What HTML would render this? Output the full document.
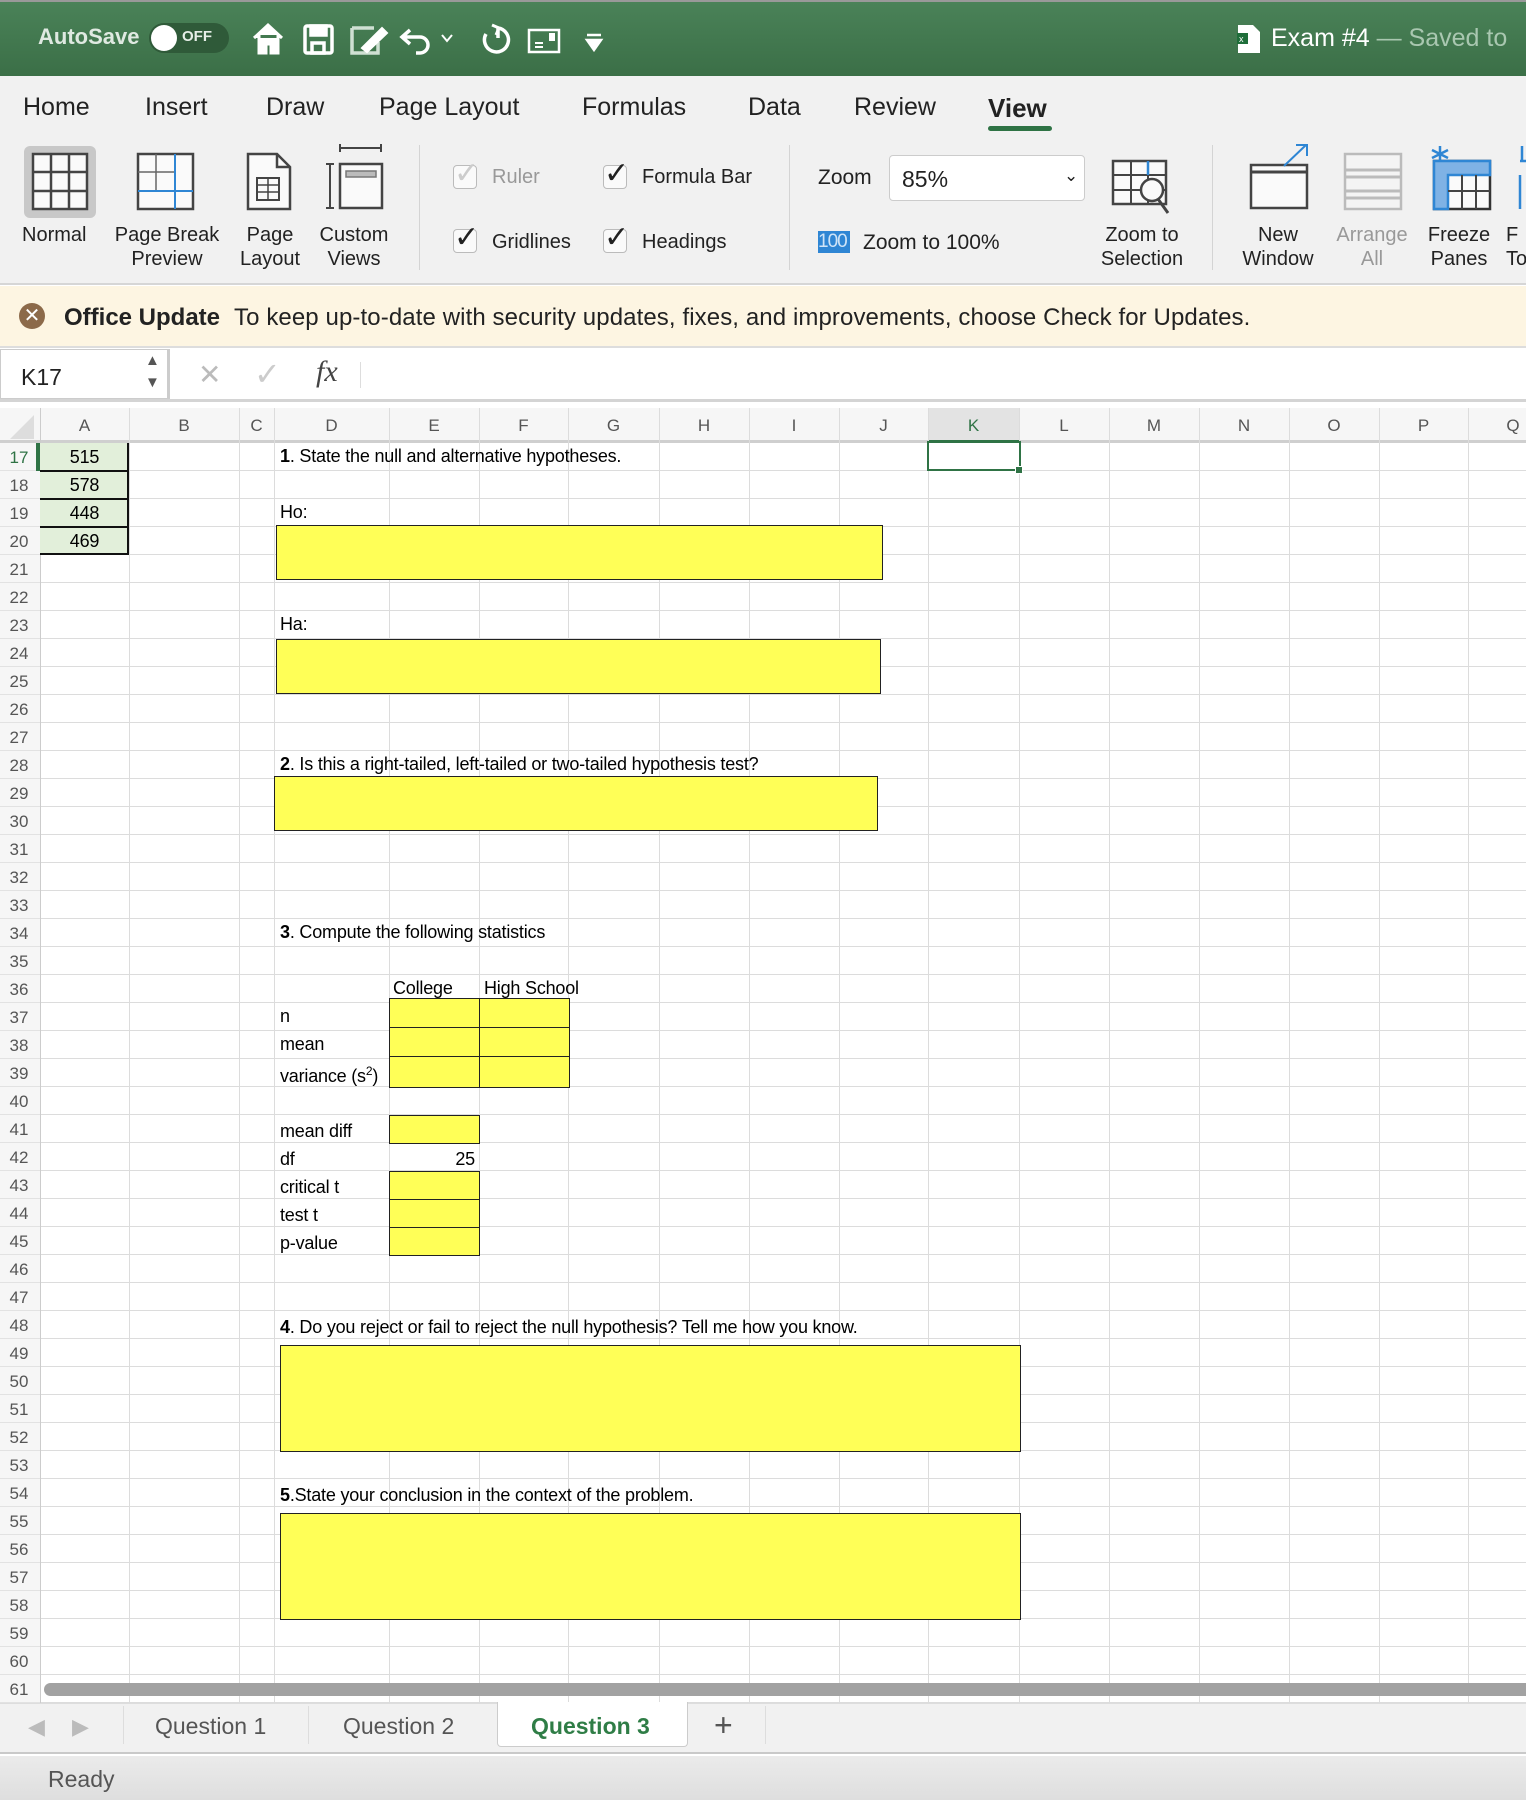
<!DOCTYPE html>
<html><head><meta charset="utf-8"><style>
*{margin:0;padding:0;box-sizing:border-box}
body{width:1526px;height:1800px;overflow:hidden;position:relative;font-family:"Liberation Sans",sans-serif;background:#fff}
.a{position:absolute}
.t{position:absolute;white-space:nowrap}
.cell{position:absolute;font-size:18px;color:#000;white-space:nowrap;font-family:"Liberation Sans",sans-serif;letter-spacing:-0.2px}
.y{position:absolute;background:#ffff57;border:1.5px solid #222}
.rl{position:absolute;left:0;width:38px;text-align:center;font-size:17px;color:#555}
.ch{position:absolute;top:408px;height:35px;line-height:35px;text-align:center;font-size:17px;color:#555}
.vl{position:absolute;top:408px;width:1px;height:1295px;background:#dcdcdc}
.lab{position:absolute;font-size:20px;color:#222;text-align:center;line-height:24px;white-space:nowrap}
.cb{position:absolute;width:24px;height:24px;border:1px solid #bbb;border-radius:4px;background:#fafafa}
</style></head><body>
<div class="a" style="left:0;top:0;width:1526px;height:76px;background:linear-gradient(#4a8258,#3b6f47);border-top:2px solid #999"></div>
<div class="t" style="left:38px;top:24px;font-size:22px;color:#dfe9e1;font-weight:bold">AutoSave</div>
<div class="a" style="left:149px;top:23px;width:80px;height:30px;border-radius:15px;background:#2f5a39"></div>
<div class="a" style="left:151px;top:25px;width:26px;height:26px;border-radius:13px;background:#fff"></div>
<div class="t" style="left:182px;top:28px;font-size:15px;color:#e6efe8;font-weight:bold">OFF</div>
<svg class="a" style="left:250px;top:20px" width="360" height="38" viewBox="0 0 360 38" fill="none" stroke="#fff" stroke-width="3.5">
<path d="M4 18 L18 5 L32 18 M9 15 V33 H16 V24 H21 V33 H28 V15" fill="#fff" stroke-width="3"/>
<rect x="55" y="6" width="27" height="27" rx="2"/><rect x="61" y="6" width="15" height="9" fill="#fff"/><rect x="62" y="23" width="12" height="10"/>
<path d="M102 8 H124 M102 8 V33 H128 V22" stroke="#cfe0d3"/><path d="M112 28 L132 8 L137 13 L117 32 Z" fill="#fff" stroke="#fff" stroke-width="2"/>
<path d="M160 10 L152 17 L160 24 M152 17 H170 A8 8 0 0 1 170 33 H166"/>
<path d="M192 15 L197 21 L202 15" stroke-width="2"/>
<path d="M248 8 V18 M248 8 A12 12 0 1 1 236 14" /><path d="M242 5 L249 8 L246 15" stroke-width="3"/>
<rect x="279" y="10" width="30" height="22" stroke-width="2.5"/><path d="M285 23 H293 M285 27 H293" stroke-width="2"/><rect x="299" y="13" width="6" height="8" fill="#fff" stroke="none"/>
<path d="M337 15 H351 M337 20 H351 L344 30 Z" fill="#fff" stroke-width="2.5"/>
</svg>
<svg class="a" style="left:1236px;top:24px" width="26" height="30"><path d="M2 1 H17 L24 8 V29 H2 Z" fill="#fff"/><rect x="1" y="9" width="11" height="11" fill="#1f6e3a"/><text x="3" y="18" font-size="9" fill="#fff" font-family="Liberation Sans">x</text></svg>
<div class="t" style="left:1271px;top:24px;font-size:25px;color:#fff">Exam #4 <span style="color:#a9c7b0">— Saved to</span></div>
<div class="a" style="left:0;top:76px;width:1526px;height:209px;background:#f1f1f1;border-bottom:2px solid #d6d6d6"></div>
<div class="t" style="left:23px;top:93px;font-size:25px;color:#222">Home</div>
<div class="t" style="left:145px;top:93px;font-size:25px;color:#222">Insert</div>
<div class="t" style="left:266px;top:93px;font-size:25px;color:#222">Draw</div>
<div class="t" style="left:379px;top:93px;font-size:25px;color:#222">Page Layout</div>
<div class="t" style="left:582px;top:93px;font-size:25px;color:#222">Formulas</div>
<div class="t" style="left:748px;top:93px;font-size:25px;color:#222">Data</div>
<div class="t" style="left:854px;top:93px;font-size:25px;color:#222">Review</div>
<div class="t" style="left:988px;top:93px;font-size:26px;color:#222;font-weight:bold">View</div>
<div class="a" style="left:988px;top:126px;width:64px;height:5px;border-radius:3px;background:#2f7345"></div>
<div class="a" style="left:24px;top:146px;width:72px;height:72px;border-radius:6px;background:#c8c8c8"></div>
<svg class="a" style="left:0;top:140px" width="1526" height="80" fill="none" stroke="#444" stroke-width="2.5">
<rect x="33" y="14" width="54" height="55" fill="#fafafa"/><path d="M51 14V69M69 14V69M33 32H87M33 51H87"/>
<rect x="138" y="14" width="55" height="55" fill="#fafafa"/><path d="M138 32H175M156 14V51" stroke="#666" stroke-width="1.5"/><path d="M175 14V69M138 51H193" stroke="#2f86d4" stroke-width="2"/>
<path d="M248 14H277L290 27V69H248Z" fill="#fafafa"/><path d="M277 14V27H290"/><rect x="257" y="38" width="22" height="22" stroke-width="2"/><path d="M268 38V60M257 45H279M257 52H279" stroke-width="1.5"/>
<path d="M340 8H381M340 4V12M381 4V12M330 24V68M326 24H334M326 68H334" stroke-width="2"/><rect x="340" y="24" width="42" height="44" fill="#fafafa"/><rect x="346" y="31" width="30" height="6" fill="#bbb" stroke="#777" stroke-width="1.5"/>
<rect x="1113" y="21" width="53" height="43" fill="#fafafa"/><path d="M1113 35H1166M1113 50H1166M1131 21V64M1148 21V64" stroke-width="2"/><circle cx="1152" cy="50" r="11" fill="#fafafa"/><path d="M1158 59L1168 73" stroke-width="3"/><path d="M1148 21V35" stroke="#2f86d4"/>
<rect x="1251" y="25" width="56" height="43" fill="#fafafa"/><path d="M1251 32H1307" stroke-width="3"/><path d="M1284 26L1306 5M1296 5H1307V16" stroke="#2f86d4" stroke-width="2"/>
<rect x="1345" y="14" width="56" height="55" fill="#f4f4f4" stroke="#bbb"/><path d="M1345 30H1401M1345 37H1401M1345 51H1401M1345 58H1401" stroke="#bbb" stroke-width="3"/>
<rect x="1434" y="21" width="56" height="48" fill="#fafafa" stroke="#333"/><path d="M1434 21H1490V35H1448V69H1434Z" fill="#7fb2e5" stroke="#2f86d4"/><path d="M1462 35V69M1476 35V69M1448 51H1490" stroke-width="2"/><path d="M1440 6V22M1432 10L1448 18M1448 10L1432 18" stroke="#2f86d4" stroke-width="2.5"/>
<path d="M1522 6V22M1520 21H1526M1520 35V69" stroke="#2f86d4" stroke-width="2.5"/>
</svg>
<div class="lab" style="left:22px;top:223px">Normal</div>
<div class="lab" style="left:110px;top:223px;width:114px">Page Break<br>Preview</div>
<div class="lab" style="left:235px;top:223px;width:70px">Page<br>Layout</div>
<div class="lab" style="left:312px;top:223px;width:84px">Custom<br>Views</div>
<div class="a" style="left:419px;top:145px;width:1px;height:125px;background:#d4d4d4"></div>
<div class="a" style="left:789px;top:145px;width:1px;height:125px;background:#d4d4d4"></div>
<div class="a" style="left:1212px;top:145px;width:1px;height:125px;background:#d4d4d4"></div>
<div class="cb" style="left:453px;top:165px"></div><div class="t" style="left:454px;top:156px;font-size:30px;color:#ccc">✓</div>
<div class="t" style="left:492px;top:166px;font-size:20px;color:#999">Ruler</div>
<div class="cb" style="left:603px;top:165px"></div><div class="t" style="left:604px;top:156px;font-size:30px;color:#222">✓</div>
<div class="t" style="left:642px;top:166px;font-size:20px;color:#222">Formula Bar</div>
<div class="cb" style="left:453px;top:229px"></div><div class="t" style="left:454px;top:220px;font-size:30px;color:#222">✓</div>
<div class="t" style="left:492px;top:231px;font-size:20px;color:#222">Gridlines</div>
<div class="cb" style="left:603px;top:229px"></div><div class="t" style="left:604px;top:220px;font-size:30px;color:#222">✓</div>
<div class="t" style="left:642px;top:231px;font-size:20px;color:#222">Headings</div>
<div class="t" style="left:818px;top:166px;font-size:21px;color:#222">Zoom</div>
<div class="a" style="left:889px;top:155px;width:196px;height:46px;background:#fff;border:1px solid #ccc;border-radius:4px"></div>
<div class="t" style="left:902px;top:166px;font-size:23px;color:#222">85%</div>
<div class="t" style="left:1064px;top:166px;font-size:17px;color:#222">⌄</div>
<div class="a" style="left:818px;top:231px;width:32px;height:22px;background:#2f86d4"></div>
<div class="t" style="left:818px;top:231px;font-size:19px;color:#cfe4f7;letter-spacing:-1px">100</div>
<div class="t" style="left:863px;top:231px;font-size:21px;color:#222">Zoom to 100%</div>
<div class="lab" style="left:1092px;top:223px;width:100px">Zoom to<br>Selection</div>
<div class="lab" style="left:1238px;top:223px;width:80px">New<br>Window</div>
<div class="lab" style="left:1332px;top:223px;width:80px;color:#999">Arrange<br>All</div>
<div class="lab" style="left:1419px;top:223px;width:80px">Freeze<br>Panes</div>
<div class="lab" style="left:1506px;top:223px;text-align:left">F<br>To</div>
<div class="a" style="left:0;top:286px;width:1526px;height:62px;background:#fdf5e2;border-bottom:2px solid #ddd"></div>
<div class="a" style="left:19px;top:303px;width:26px;height:26px;border-radius:13px;background:#8c6a4a;color:#fff;font-size:20px;line-height:26px;text-align:center">✕</div>
<div class="t" style="left:64px;top:304px;font-size:24px;color:#222;font-weight:bold">Office Update</div>
<div class="t" style="left:234px;top:304px;font-size:24px;color:#222;letter-spacing:0.1px">To keep up-to-date with security updates, fixes, and improvements, choose Check for Updates.</div>
<div class="a" style="left:0;top:348px;width:1526px;height:54px;background:#fff;border-bottom:3px solid #d4d4d4"></div>
<div class="a" style="left:0;top:349px;width:170px;height:50px;border:1px solid #ccc;border-right:3px solid #ccc"></div>
<div class="t" style="left:21px;top:364px;font-size:23px;color:#222">K17</div>
<div class="t" style="left:145px;top:352px;font-size:15px;color:#555">▲</div>
<div class="t" style="left:145px;top:374px;font-size:15px;color:#555">▼</div>
<div class="t" style="left:198px;top:358px;font-size:28px;color:#bbb">✕</div>
<div class="t" style="left:254px;top:355px;font-size:32px;color:#ccc">✓</div>
<div class="t" style="left:316px;top:355px;font-size:30px;color:#444;font-family:'Liberation Serif',serif;font-style:italic">fx</div>
<div class="a" style="left:360px;top:362px;width:1px;height:26px;background:#ddd"></div>
<div class="a" style="left:0;top:408px;width:1526px;height:35px;background:#f6f6f6;border-bottom:3px solid #cfcfcf"></div>
<div class="a" style="left:0;top:443px;width:40px;height:1260px;background:#f6f6f6"></div>
<div class="a" style="left:40px;top:443px;width:1486px;height:1260px;background:repeating-linear-gradient(to bottom,transparent 0,transparent 27px,#dcdcdc 27px,#dcdcdc 28px)"></div>
<div class="a" style="left:0;top:443px;width:40px;height:1260px;background:repeating-linear-gradient(to bottom,transparent 0,transparent 27px,#e2e2e2 27px,#e2e2e2 28px)"></div>
<svg class="a" style="left:8px;top:413px" width="28" height="28"><path d="M26 2V26H2Z" fill="#ddd"/></svg>
<div class="vl" style="left:40px;background:#ccc"></div><div class="vl" style="left:129px"></div><div class="vl" style="left:239px"></div><div class="vl" style="left:274px"></div><div class="vl" style="left:389px"></div><div class="vl" style="left:479px"></div><div class="vl" style="left:568px"></div><div class="vl" style="left:659px"></div><div class="vl" style="left:749px"></div><div class="vl" style="left:839px"></div><div class="vl" style="left:928px"></div><div class="vl" style="left:1019px"></div><div class="vl" style="left:1109px"></div><div class="vl" style="left:1199px"></div><div class="vl" style="left:1289px"></div><div class="vl" style="left:1379px"></div><div class="vl" style="left:1468px"></div>
<div class="a" style="left:929px;top:408px;width:90px;height:35px;background:#e3e3e3;border-bottom:3px solid #2f7345"></div>
<div class="ch" style="left:40px;width:89px">A</div><div class="ch" style="left:129px;width:110px">B</div><div class="ch" style="left:239px;width:35px">C</div><div class="ch" style="left:274px;width:115px">D</div><div class="ch" style="left:389px;width:90px">E</div><div class="ch" style="left:479px;width:89px">F</div><div class="ch" style="left:568px;width:91px">G</div><div class="ch" style="left:659px;width:90px">H</div><div class="ch" style="left:749px;width:90px">I</div><div class="ch" style="left:839px;width:89px">J</div><div class="ch" style="left:928px;width:91px;color:#2f7345">K</div><div class="ch" style="left:1019px;width:90px">L</div><div class="ch" style="left:1109px;width:90px">M</div><div class="ch" style="left:1199px;width:90px">N</div><div class="ch" style="left:1289px;width:90px">O</div><div class="ch" style="left:1379px;width:89px">P</div><div class="ch" style="left:1468px;width:90px">Q</div>
<div class="a" style="left:36px;top:443px;width:4px;height:28px;background:#2f7345"></div>
<div id="rows"></div>
<script>
var h='';for(var i=0;i<45;i++){var y=443+i*28+5;h+='<div class="rl" style="top:'+y+'px;'+(i==0?'color:#2f7345':'')+'">'+(17+i)+'</div>';}
document.getElementById('rows').innerHTML=h;
</script>
<div class="a" style="left:40px;top:443px;width:89px;height:112px;background:#e2efda;border-right:2px solid #111"></div>
<div class="a" style="left:40px;top:470px;width:89px;height:2px;background:#111"></div>
<div class="a" style="left:40px;top:498px;width:89px;height:2px;background:#111"></div>
<div class="a" style="left:40px;top:526px;width:89px;height:2px;background:#111"></div>
<div class="a" style="left:40px;top:553px;width:89px;height:2px;background:#111"></div>
<div class="cell" style="left:40px;width:89px;text-align:center;top:447px">515</div>
<div class="cell" style="left:40px;width:89px;text-align:center;top:475px">578</div>
<div class="cell" style="left:40px;width:89px;text-align:center;top:503px">448</div>
<div class="cell" style="left:40px;width:89px;text-align:center;top:531px">469</div>
<div class="a" style="left:927px;top:441px;width:94px;height:30px;border:2.5px solid #2f7345"></div>
<div class="a" style="left:1015px;top:466px;width:8px;height:8px;background:#2f7345;border:1px solid #fff"></div>
<div class="cell" style="left:280px;top:446px"><b>1</b>. State the null and alternative hypotheses.</div>
<div class="cell" style="left:280px;top:502px">Ho:</div>
<div class="y" style="left:276px;top:525px;width:607px;height:55px"></div>
<div class="cell" style="left:280px;top:614px">Ha:</div>
<div class="y" style="left:276px;top:639px;width:605px;height:55px"></div>
<div class="cell" style="left:280px;top:754px"><b>2</b>. Is this a right-tailed, left-tailed or two-tailed hypothesis test?</div>
<div class="y" style="left:274px;top:776px;width:604px;height:55px"></div>
<div class="cell" style="left:280px;top:922px"><b>3</b>. Compute the following statistics</div>
<div class="cell" style="left:393px;top:978px">College</div>
<div class="cell" style="left:484px;top:978px">High School</div>
<div class="y" style="left:389px;top:998px;width:91px;height:30px"></div><div class="y" style="left:479px;top:998px;width:91px;height:30px"></div>
<div class="y" style="left:389px;top:1027px;width:91px;height:30px"></div><div class="y" style="left:479px;top:1027px;width:91px;height:30px"></div>
<div class="y" style="left:389px;top:1056px;width:91px;height:32px"></div><div class="y" style="left:479px;top:1056px;width:91px;height:32px"></div>
<div class="cell" style="left:280px;top:1006px">n</div>
<div class="cell" style="left:280px;top:1034px">mean</div>
<div class="cell" style="left:280px;top:1064px">variance (s<sup style="font-size:12px">2</sup>)</div>
<div class="y" style="left:389px;top:1115px;width:91px;height:29px"></div>
<div class="cell" style="left:280px;top:1121px">mean diff</div>
<div class="cell" style="left:280px;top:1149px">df</div>
<div class="cell" style="left:389px;width:86px;text-align:right;top:1149px">25</div>
<div class="y" style="left:389px;top:1171px;width:91px;height:29px"></div>
<div class="y" style="left:389px;top:1199px;width:91px;height:29px"></div>
<div class="y" style="left:389px;top:1227px;width:91px;height:29px"></div>
<div class="cell" style="left:280px;top:1177px">critical t</div>
<div class="cell" style="left:280px;top:1205px">test t</div>
<div class="cell" style="left:280px;top:1233px">p-value</div>
<div class="cell" style="left:280px;top:1317px"><b>4</b>. Do you reject or fail to reject the null hypothesis? Tell me how you know.</div>
<div class="y" style="left:280px;top:1345px;width:741px;height:107px"></div>
<div class="cell" style="left:280px;top:1485px"><b>5</b>.State your conclusion in the context of the problem.</div>
<div class="y" style="left:280px;top:1513px;width:741px;height:107px"></div>
<div class="a" style="left:44px;top:1683px;width:1490px;height:13px;border-radius:7px;background:#a2a2a2"></div>
<div class="a" style="left:0;top:1703px;width:1526px;height:51px;background:#f1f1f1;border-top:1px solid #ddd;border-bottom:2px solid #c9c9c9"></div>
<div class="t" style="left:28px;top:1714px;font-size:22px;color:#bbb">◀</div>
<div class="t" style="left:72px;top:1714px;font-size:22px;color:#bbb">▶</div>
<div class="a" style="left:123px;top:1706px;width:1px;height:38px;background:#ddd"></div>
<div class="t" style="left:155px;top:1713px;font-size:23px;color:#555">Question 1</div>
<div class="a" style="left:308px;top:1706px;width:1px;height:38px;background:#ddd"></div>
<div class="t" style="left:343px;top:1713px;font-size:23px;color:#555">Question 2</div>
<div class="a" style="left:497px;top:1702px;width:191px;height:45px;background:#fff;border:1px solid #ccc;border-top:none;border-radius:0 0 4px 4px"></div>
<div class="t" style="left:531px;top:1713px;font-size:23px;color:#2f7d46;font-weight:bold">Question 3</div>
<div class="t" style="left:714px;top:1707px;font-size:32px;color:#555">+</div>
<div class="a" style="left:765px;top:1706px;width:1px;height:38px;background:#ddd"></div>
<div class="a" style="left:0;top:1756px;width:1526px;height:44px;background:linear-gradient(#ebebeb,#dedede)"></div>
<div class="t" style="left:48px;top:1766px;font-size:23px;color:#555">Ready</div>
</body></html>
